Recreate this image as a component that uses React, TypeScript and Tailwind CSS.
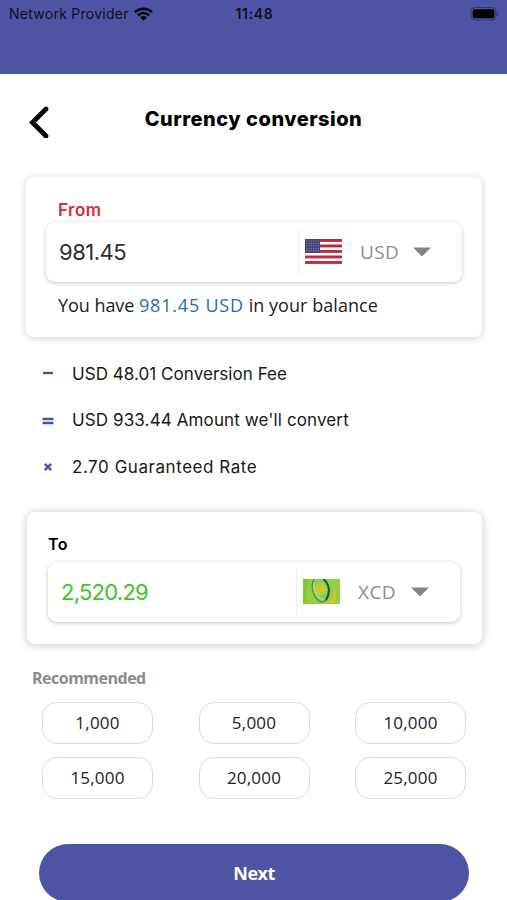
import { memo } from 'react';
import type { ReactNode } from 'react';

const STEPS = [
  { sign: 'minus', text: 'USD 48.01 Conversion Fee', tracking: 'tracking-[0.05px]' },
  { sign: 'equals', text: "USD 933.44 Amount we'll convert", tracking: 'tracking-[0.12px]' },
  { sign: 'times', text: '2.70 Guaranteed Rate', tracking: 'tracking-[0.55px]' },
];

const AMOUNTS = ['1,000', '5,000', '10,000', '15,000', '20,000', '25,000'];

const SIGN_PATHS: Record<string, string> = {
  minus: 'M1 5h10',
  equals: 'M0.5 4h11M0.5 8h11',
  times: 'M2.8 2.8l6.4 6.4M9.2 2.8l-6.4 6.4',
};

function StatusBar() {
  return (
    <header className="h-[74px] shrink-0 bg-[#4d54a4]">
      <div className="grid h-[27px] grid-cols-3 items-center pl-[9px] pr-[7px] font-['Inter',sans-serif] text-black/85">
        <div className="flex items-center gap-[5px]">
          <span className="whitespace-nowrap text-[14px] tracking-[0.26px]">Network Provider</span>
          <svg width="19" height="14" viewBox="0 0 19 14" className="shrink-0 text-black">
            <g fill="none" stroke="currentColor" strokeWidth="2.5">
              <path d="M1 5.1a12.2 12.2 0 0 1 17 0" />
              <path d="M4 8.3a7.8 7.8 0 0 1 11 0" />
            </g>
            <path d="M6.2 10.4a4.7 4.7 0 0 1 6.6 0L9.5 13.7z" fill="currentColor" />
          </svg>
        </div>
        <span className="text-center text-[14px] font-semibold tracking-[0.7px]">11:48</span>
        <svg width="30" height="14" viewBox="0 0 30 14" className="justify-self-end">
          <rect x="1" y="0.5" width="25" height="12.5" rx="4" fill="none" stroke="#000" strokeOpacity="0.35" />
          <rect x="2.7" y="2.2" width="21.6" height="9.1" rx="2" fill="#000" />
          <path d="M27.3 5v4c1.5-.6 1.5-3.4 0-4z" fill="#000" fillOpacity="0.4" />
        </svg>
      </div>
    </header>
  );
}

function UsFlag() {
  return (
    <svg width="37" height="25" viewBox="0 0 37 25" className="-mt-px">
      <rect width="37" height="25" fill="#fff" />
      {[0, 5.5, 11, 16.5, 22].map((y) => (
        <rect key={y} y={y} width="37" height="2.9" fill="#b72b43" />
      ))}
      <rect width="15" height="13.9" fill="#454378" />
      <g fill="#aaa8c5">
        {[2, 4.4, 6.8, 9.2, 11.6].map((y) =>
          [1.8, 4.1, 6.4, 8.7, 11, 13.3].map((x) => <circle key={`${x}-${y}`} cx={x} cy={y} r="0.5" />)
        )}
      </g>
    </svg>
  );
}

function XcdFlag() {
  return (
    <svg width="37" height="25" viewBox="0 0 37 25" className="-mt-px">
      <rect width="37" height="25" fill="#92cf45" />
      <path d="M0 0h6l-3 14 3 11H0z" fill="#80c936" />
      <path d="M3 14c2 5 5 8 11 11H4z" fill="#a8c832" />
      <path d="M31 11h2l-1 13h-8c5-3 7-7 7-13z" fill="#d9c52d" />
      <ellipse cx="17.5" cy="10" rx="8" ry="13" transform="rotate(-12 17.5 10)" fill="#8ace55" stroke="#4b9448" strokeWidth="1.3" />
      <path d="M20 0c6 4 8 13 3 21" fill="none" stroke="#23523d" strokeWidth="2" />
      <path d="M11 4c-1 8 3 15 10 17" fill="none" stroke="#b0df8c" strokeWidth="1.3" />
      <circle cx="17.5" cy="10" r="4.8" fill="none" stroke="#d2da43" strokeWidth="2" strokeDasharray="1.4 1.2" />
      <circle cx="17.5" cy="10" r="3.6" fill="#dfbf29" />
    </svg>
  );
}

interface AmountFieldProps {
  value: string;
  valueClass: string;
  code: string;
  flag: ReactNode;
}

function AmountField({ value, valueClass, code, flag }: AmountFieldProps) {
  return (
    <div className="flex h-[60px] items-center rounded-[9px] bg-white pl-[13px] pr-[31px] shadow-[0_1px_4px_rgba(0,0,0,0.24)]">
      <span className={`flex-1 font-['Inter',sans-serif] text-[22px] ${valueClass}`}>{value}</span>
      <div className="flex h-12 items-center border-l border-[#f0f0f0] pl-[6px]">
        {flag}
        <span className="ml-[18px] w-[40px] whitespace-nowrap font-['Open_Sans',sans-serif] text-[19px] tracking-[0.4px] text-[#8e8e8e]">
          {code}
        </span>
        <svg width="18" height="10" viewBox="0 0 18 10" className="ml-[13px]">
          <path d="M0 .5h18L9 9.5z" fill="#858585" />
        </svg>
      </div>
    </div>
  );
}

const App = memo(function App() {
  return (
    <div className="flex h-[900px] w-[507px] flex-col overflow-hidden bg-white font-['Open_Sans',sans-serif] text-[#222]">
      <StatusBar />

      <div className="grid h-[103px] shrink-0 grid-cols-[90px_1fr_90px] pt-[29px]">
        <svg width="20" height="32" viewBox="0 0 20 32" className="ml-[29px] mt-[3px]">
          <path d="M17 3L3.5 16.5 17 30" fill="none" stroke="#000" strokeWidth="4.8" strokeLinecap="round" strokeLinejoin="miter" />
        </svg>
        <h1 className="text-center font-['Inter',sans-serif] text-[20px] leading-[32px] font-extrabold tracking-[0.5px] whitespace-nowrap text-black">
          Currency conversion
        </h1>
      </div>

      {/* From */}
      <section className="ml-[26px] h-[160px] w-[456px] shrink-0 rounded-[8px] px-5 pt-[21px] shadow-[0_1px_8px_rgba(0,0,0,0.18)]">
        <div className="ml-3 h-6 font-['Inter',sans-serif] text-[17px] leading-6 font-semibold tracking-[0.5px] text-[#d32f35]">From</div>
        <AmountField value="981.45" valueClass="text-[#2d2d2d] tracking-[-0.5px]" code="USD" flag={<UsFlag />} />
        <p className="ml-3 mt-[11px] text-[18px] leading-6 whitespace-nowrap">
          <span className="tracking-[-0.05px]">You have </span>
          <span className="tracking-[0.8px] text-[#2a69bb]">981.45 USD</span>
          <span className="tracking-[0.05px]"> in your balance</span>
        </p>
      </section>

      <ul className="mt-[14px] ml-[42px] shrink-0 font-['Inter',sans-serif] text-[17px] text-[#181818]">
        {STEPS.map((step) => (
          <li key={step.sign} className="flex h-[46.5px] items-center">
            <svg width="12" height="12" viewBox="0 0 12 12">
              <path d={SIGN_PATHS[step.sign]} fill="none" stroke="#4d54a4" strokeWidth="2.4" />
            </svg>
            <span className={`ml-[18px] whitespace-nowrap ${step.tracking}`}>{step.text}</span>
          </li>
        ))}
      </ul>

      {/* To */}
      <section className="mt-[21.5px] ml-[27px] h-[132px] w-[455px] shrink-0 rounded-[8px] pt-5 pr-[22px] pl-[21px] shadow-[0_1px_7px_2px_rgba(0,0,0,0.15)]">
        <div className="h-[30px] font-['Inter',sans-serif] text-[16px] leading-6 font-semibold tracking-[0.5px] text-black">To</div>
        <AmountField value="2,520.29" valueClass="text-[#43c12d] tracking-[-0.75px]" code="XCD" flag={<XcdFlag />} />
      </section>

      <h2 className="mt-[22px] ml-8 shrink-0 text-[16px] leading-6 font-bold tracking-[-0.5px] text-[#8b8b8b]">Recommended</h2>
      <div className="mt-3 ml-[42px] grid w-[424px] shrink-0 grid-cols-[111px_111px_111px] justify-between gap-y-[13px]">
        {AMOUNTS.map((amount) => (
          <button key={amount} className="h-[42px] rounded-[15px] border border-[#d9d9d9] text-[17px] tracking-[0.2px]">
            {amount}
          </button>
        ))}
      </div>

      <button className="mt-[45px] ml-[39px] h-[58px] w-[430px] shrink-0 rounded-full bg-[#4d54a4] text-[18px] font-bold tracking-[-0.5px] text-white">
        Next
      </button>
    </div>
  );
});

export default App;
